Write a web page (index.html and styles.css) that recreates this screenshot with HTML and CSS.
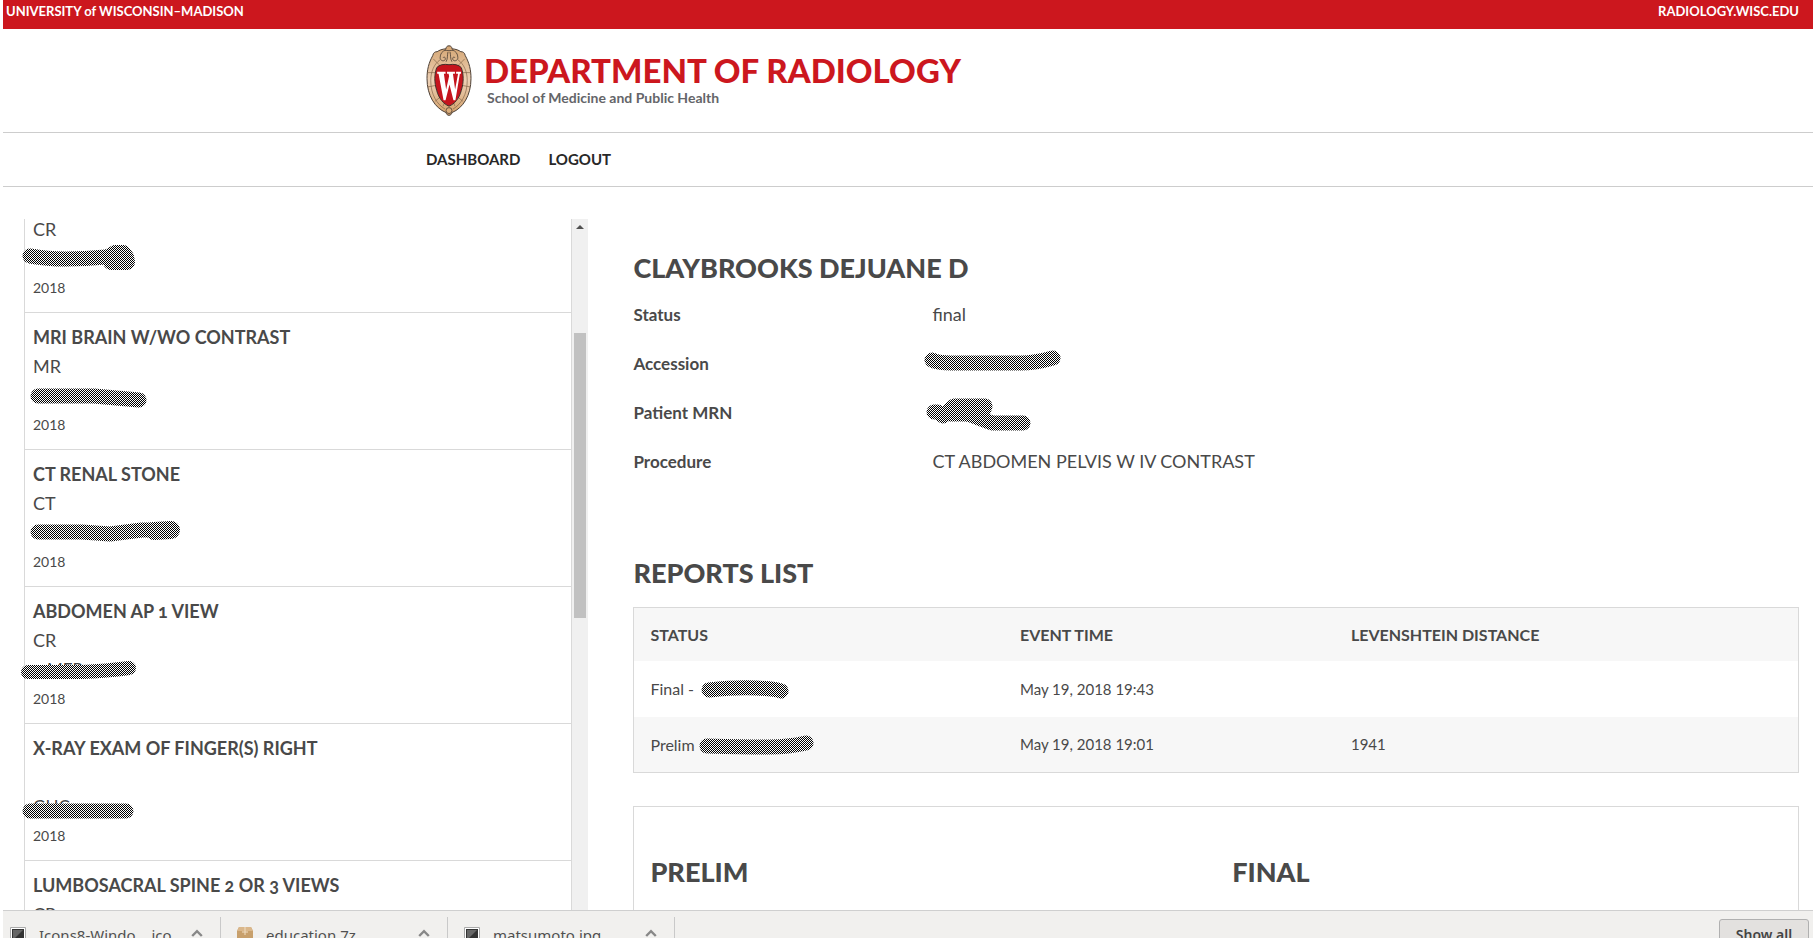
FILE: index.html
```html
<!DOCTYPE html>
<html lang="en">
<head>
<meta charset="utf-8">
<title>Department of Radiology</title>
<link rel="stylesheet" href="styles.css">
</head>
<body>
<svg class="defs" width="0" height="0" aria-hidden="true">
  <defs>
    <pattern id="hatch" width="2" height="2" patternUnits="userSpaceOnUse">
      <rect width="2" height="2" fill="#fff"/><rect width="1" height="1" fill="#000"/><rect x="1" y="1" width="1" height="1" fill="#000"/>
    </pattern>
  </defs>
</svg>
<div class="topbar"><a href="#">UNIVERSITY of WISCONSIN–MADISON</a><a href="#">RADIOLOGY.WISC.EDU</a></div>
<header class="masthead">
  <svg class="crest" viewBox="0 0 46 72" aria-hidden="true">
    <defs><linearGradient id="tan" x1="0" y1="0" x2="0" y2="1"><stop offset="0" stop-color="#d5a673"/><stop offset=".5" stop-color="#edd0b5"/><stop offset="1" stop-color="#d39f68"/></linearGradient></defs>
    <path d="M23 .8c2 0 3 1.400 3 3 4 .4 7 1.500 9 3 2-.2 4 1 4.500 4C43.500 18 45.300 25 45.300 34c0 17-8 30-19.300 34.500C25.500 70.500 24.500 71.300 23 71.300s-2.500-.8-3-2.800C8.700 64 .7 51 .7 34c0-9 1.800-16 5.800-23.200.5-3 2.500-4.200 4.500-4 2-1.500 5-2.600 9-3 0-1.600 1-3 3-3z" fill="url(#tan)" stroke="#4a3d33" stroke-width="1"/>
    <path d="M14 15C8 19 4.500 27 4.500 36c0 14 6 24 14.500 29M32 15c6 4 9.500 12 9.500 21 0 14-6 24-14.500 29M.8 28H9M45.200 28H37M1.500 42.500 9.500 41M44.500 42.500l-8-1.500M9 57l6-5M37 57l-6-5M17 62l2-5M29 62l-2-5M7 14l6 6M39 14l-6 6" fill="none" stroke="#75583e" stroke-width=".6"/>
    <path d="M20 5c-4 1-6 4-6 8 0 3 4 4 5 2s-1-4-2-2M26 5c4 1 6 4 6 8 0 3-4 4-5 2s1-4 2-2M22 7c-1 3 0 7-2 10M24 7c1 3 0 7 2 10M19 5c2 1 6 1 8 0" fill="none" stroke="#4a3d33" stroke-width=".8"/>
    <circle cx="23" cy="66.500" r="3" fill="#dcae7c" stroke="#4a3d33" stroke-width=".8"/>
    <path d="M23 20c5-1 10 0 12.500 3 2.500 7 2.500 15 0 23-2 8-7 14-12.500 16-5.500-2-10.500-8-12.500-16-2.500-8-2.500-16 0-23C13 20 18 19 23 20z" fill="#c5141d" stroke="#3d302b" stroke-width="1"/>
    <path d="M11 27h8.500v2.200h-1.700l2.300 16 3-13.500-.5-2.500H21V27h8v2.200h-2l2.200 16 3-16h-2V27h5v2.200h-1.200L29.500 56h-2l-4-16-4 16h-2L12.400 29.200H11z" fill="#fff"/>
  </svg>
  <div class="brand"><h1>DEPARTMENT OF RADIOLOGY</h1><p>School of Medicine and Public Health</p></div>
</header>
<nav class="menu"><a href="#">DASHBOARD</a><a href="#">LOGOUT</a></nav>
<main class="content">
  <aside class="studies">
    <div class="study-list">
      <article class="study partial"><p>CR</p><div class="hidden-text"><svg class="scribble" viewBox="0 0 160 36"><path d="M8 14 Q25 17 44 17T84 15" stroke-width="15"/><path d="M88 14l5-3h8l3 4 1 5H89z" stroke-width="16"/></svg></div><time>2018</time></article>
      <article class="study"><h2>MRI BRAIN W/WO CONTRAST</h2><p>MR</p><div class="hidden-text"><svg class="scribble" viewBox="0 0 160 36"><path d="M16 17H72Q95 19 117 21" stroke-width="15"/></svg></div><time>2018</time></article>
      <article class="study"><h2>CT RENAL STONE</h2><p>CT</p><div class="hidden-text"><svg class="scribble" viewBox="0 0 160 36"><path d="M16 16H60L88 18 120 14H149" stroke-width="15"/><path d="M132 15l17-1" stroke-width="18"/></svg></div><time>2018</time></article>
      <article class="study"><h2>ABDOMEN AP 1 VIEW</h2><p>CR</p><div class="hidden-text"><span class="remainder">MER</span><svg class="scribble" viewBox="0 0 160 36"><path d="M6 19H60Q85 18 107 15" stroke-width="14"/></svg></div><time>2018</time></article>
      <article class="study"><h2>X-RAY EXAM OF FINGER(S) RIGHT</h2><p></p><div class="hidden-text">GHC<svg class="scribble" viewBox="0 0 160 36"><path d="M8 21H104" stroke-width="15"/></svg></div><time>2018</time></article>
      <article class="study"><h2>LUMBOSACRAL SPINE 2 OR 3 VIEWS</h2><p>CR</p></article>
    </div>
    <div class="scrollbar"><svg class="up" viewBox="0 0 8 4"><path d="M0 4h8L4 0z" fill="#505050"/></svg><div class="thumb"></div></div>
  </aside>
  <section class="details">
    <h2>CLAYBROOKS DEJUANE D</h2>
    <dl class="facts">
      <dt>Status</dt><dd>final</dd>
      <dt>Accession</dt><dd><svg class="scribble" viewBox="0 0 160 36"><path d="M12 16Q18 19 31 19H101Q115 19 133 14" stroke-width="15"/></svg></dd>
      <dt>Patient MRN</dt><dd><svg class="scribble" viewBox="0 0 160 36"><path d="M14 19h4l5 4 11-10h31l-3 8H30" stroke-width="15"/><path d="M40 18 72 30H103" stroke-width="15"/></svg></dd>
      <dt>Procedure</dt><dd>CT ABDOMEN PELVIS W IV CONTRAST</dd>
    </dl>
    <h2>REPORTS LIST</h2>
    <table class="reports">
      <thead><tr><th class="col-status">STATUS</th><th class="col-time">EVENT TIME</th><th>LEVENSHTEIN DISTANCE</th></tr></thead>
      <tbody>
        <tr><td>Final - <span class="hidden-name"><svg class="scribble" viewBox="0 0 160 36"><path d="M18 19Q45 16 65 17T90 20" stroke-width="15"/></svg></span></td><td class="figures">May 19, 2018 19:43</td><td class="figures"></td></tr>
        <tr><td>Prelim <span class="hidden-name"><svg class="scribble" viewBox="0 0 160 36"><path d="M15 19Q57 20 77 20T114 16" stroke-width="15"/></svg></span></td><td class="figures">May 19, 2018 19:01</td><td class="figures">1941</td></tr>
      </tbody>
    </table>
    <div class="compare"><h2>PRELIM</h2><h2>FINAL</h2></div>
  </section>
</main>
<footer class="downloads">
  <div class="download"><svg viewBox="0 0 16 16"><path d="M.5.500h15v15H.5z" fill="#fff" stroke="#aaa"/><path d="M2 2h12v12H2z" fill="#333"/><path d="M3 3h10L3 13z" fill="#666"/></svg><span>Icons8-Windo….ico</span><button aria-label="Options"><svg viewBox="0 0 10 6"><path d="M1 5.500 5 1.500 9 5.500"/></svg></button></div>
  <div class="download"><svg viewBox="0 0 16 16"><path d="M2 0h12l2 4v12H0V4z" fill="#c8a06c"/><path d="M2 0h12l2 4H0z" fill="#dab78b"/><path d="M8 0v8M5 5h6" stroke="#f1dec2"/></svg><span>education.7z</span><button aria-label="Options"><svg viewBox="0 0 10 6"><path d="M1 5.500 5 1.500 9 5.500"/></svg></button></div>
  <div class="download"><svg viewBox="0 0 16 16"><path d="M.5.500h15v15H.5z" fill="#fff" stroke="#aaa"/><path d="M2 2h12v12H2z" fill="#333"/><path d="M3 3h10L3 13z" fill="#666"/></svg><span>matsumoto.jpg</span><button aria-label="Options"><svg viewBox="0 0 10 6"><path d="M1 5.500 5 1.500 9 5.500"/></svg></button></div>
  <button class="show-all">Show all</button>
</footer>
</body>
</html>
```
FILE: styles.css
```css
* { box-sizing: border-box; }
html { height: 100%; }
body {
  margin: 0;
  padding-left: 3px;
  height: 100vh;
  display: flex;
  flex-direction: column;
  overflow: hidden;
  background: #fff;
  color: #494949;
  font-family: Lato, "Liberation Sans", sans-serif;
  font-size: 17px;
}
h1, h2, p, dl, dd { margin: 0; }
a { color: inherit; text-decoration: none; }
.defs { position: absolute; }
.topbar {
  flex: none;
  display: flex;
  justify-content: space-between;
  height: 29px;
  padding: 0 14px 0 3px;
  background: #cc171e;
  color: #fff;
  font-size: 13px;
  font-weight: 700;
  line-height: 22px;
}
.masthead {
  flex: none;
  display: flex;
  gap: 12px;
  height: 104px;
  padding: 16px 0 0 423px;
  border-bottom: 1px solid #cdcdcd;
}
.crest { width: 46px; height: 71px; }
.brand { padding-top: 5px; }
.brand h1 { color: #cc171e; font-size: 33px; font-weight: 900; line-height: 40px; }
.brand p { padding-left: 3px; color: #646569; font-size: 14px; font-weight: 700; line-height: 16px; }
.menu {
  flex: none;
  display: flex;
  gap: 28px;
  height: 54px;
  padding-left: 423px;
  border-bottom: 1px solid #cdcdcd;
  color: #282828;
  font-size: 15px;
  font-weight: 700;
  line-height: 52px;
}
.content { flex: 1; min-height: 0; display: flex; padding: 32px 14px 0 21px; }
.studies { flex: none; display: flex; width: 31.8%; min-width: 300px; }
.study-list { flex: 1; overflow-x: visible; overflow-y: clip; border: solid #d9d9d9; border-width: 0 1px; }
.study { padding: 10px 8px; border-bottom: 1px solid #d9d9d9; line-height: 29px; }
.study h2 { font-size: 18px; font-weight: 700; line-height: 29px; font-variant-numeric: oldstyle-nums; }
.study p { height: 29px; font-size: 18px; }
.study time { display: block; font-size: 14px; }
.partial { display: flex; flex-direction: column; justify-content: flex-end; height: 94px; padding-top: 0; }
.partial > * { flex: none; }
.hidden-text { position: relative; height: 29px; }
.remainder { padding-left: 14px; }
.scribble { position: absolute; width: 160px; height: 36px; left: -11px; top: -2px; overflow: visible; }
.scribble path { fill: none; stroke: url(#hatch); stroke-linecap: round; stroke-linejoin: round; }
.scrollbar { flex: none; width: 16px; padding: 6px 2px 0; background: #f0f0f0; }
.up { display: block; width: 8px; height: 4px; margin: 0 auto; }
.thumb { height: 285px; margin-top: 104px; background: #c1c1c1; }
.details { flex: 1; min-width: 0; padding: 32px 0 0 45px; }
.details h2 { font-size: 27px; font-weight: 900; line-height: 34px; }
.facts { display: grid; grid-template-columns: 299px 1fr; margin: 5px 0 70px; line-height: 49px; font-size: 18px; }
.facts dt { font-size: 17px; font-weight: 700; }
.facts dd { position: relative; height: 49px; }
.facts .scribble { top: 5px; left: -12px; }
.reports { width: 100%; margin-top: 17px; border: 1px solid #d9d9d9; border-collapse: collapse; table-layout: fixed; }
.reports th { height: 53px; padding: 0 16px; text-align: left; font-size: 16px; font-weight: 700; }
.reports td { height: 56px; padding: 0 16px; font-size: 16px; }
.reports .figures { font-size: 15px; }
.reports tr { background: #f7f7f7; }
.reports tbody tr:first-child { background: #fff; }
.col-status { width: 370px; }
.col-time { width: 331px; }
.hidden-name { position: relative; }
.hidden-name .scribble { top: -8px; left: -3px; }
.compare { display: grid; grid-template-columns: 1fr 1fr; height: 200px; margin-top: 33px; padding-top: 48px; border: 1px solid #d9d9d9; }
.compare h2 { padding-left: 16px; }
.downloads {
  position: relative;
  flex: none;
  display: flex;
  height: 28px;
  overflow: hidden;
  border-top: 1px solid #cfcfcf;
  background: #f1f0ee;
  color: #505050;
  font-family: "Noto Sans", "Open Sans", sans-serif;
  font-size: 15px;
}
.download { display: flex; width: 227px; height: 40px; margin-top: 6px; padding: 10px 17px 0 16px; border-right: 1px solid #c9c9c9; line-height: 16px; }
.download:first-child { width: 218px; padding-left: 7px; }
.download > svg { width: 16px; height: 16px; margin-right: 13px; }
.download > span { flex: 1; white-space: nowrap; }
.download button { width: 12px; height: 12px; padding: 0; border: 0; background: none; line-height: 0; }
.download button svg { width: 12px; height: 8px; fill: none; stroke: #888; stroke-width: 2; }
.show-all {
  width: 90px;
  height: 30px;
  margin: 8px 4px 0 auto;
  padding: 0;
  border: 1px solid #b0b0b0;
  border-radius: 3px;
  background: #e3e1df;
  color: #444;
  font: 600 14px "Noto Sans", "Open Sans", sans-serif;
}
```
